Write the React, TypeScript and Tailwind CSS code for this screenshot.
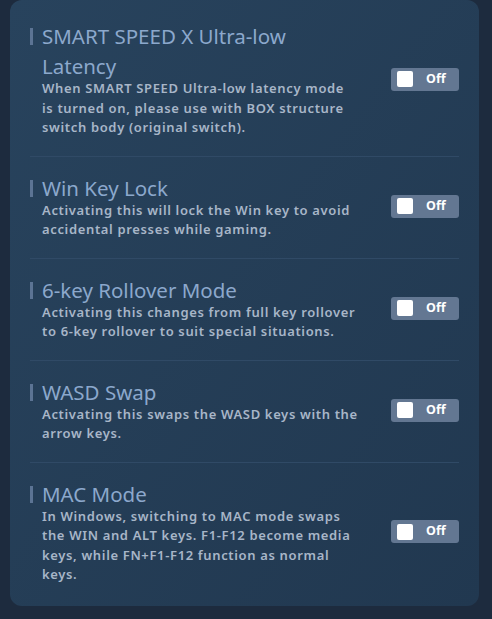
const SETTINGS = [
  {
    title: 'SMART SPEED X Ultra-low Latency',
    desc: 'When SMART SPEED Ultra-low latency mode is turned on, please use with BOX structure switch body (original switch).',
    narrow: true,
  },
  {
    title: 'Win Key Lock',
    desc: 'Activating this will lock the Win key to avoid accidental presses while gaming.',
  },
  {
    title: '6-key Rollover Mode',
    desc: 'Activating this changes from full key rollover to 6-key rollover to suit special situations.',
  },
  {
    title: 'WASD Swap',
    desc: 'Activating this swaps the WASD keys with the arrow keys.',
  },
  {
    title: 'MAC Mode',
    desc: 'In Windows, switching to MAC mode swaps the WIN and ALT keys. F1-F12 become media keys, while FN+F1-F12 function as normal keys.',
  },
]

function Toggle() {
  return (
    <button className="flex h-[23px] w-[68px] shrink-0 items-center rounded-[3px] bg-[#637792] pl-[6px]">
      <span className="h-4 w-4 rounded-[2px] bg-white" />
      <span className="ml-[13px] text-[12.5px] font-bold text-white">Off</span>
    </button>
  )
}

export default function App() {
  return (
    <div
      className="min-h-[619px] w-[492px] bg-[#1d2b3e] pl-[10px] pr-[13px]"
      style={{ fontFamily: '"Noto Sans", sans-serif' }}
    >
      <div className="rounded-xl bg-gradient-to-br from-[#28435d] to-[#213850] px-5 pb-[3px] pt-[5px]">
        {SETTINGS.map((s, i) => (
          <div
            key={s.title}
            className={`flex items-center pb-[18px] pt-4 ${i < SETTINGS.length - 1 ? 'border-b border-[#304a66]' : ''}`}
          >
            <div className="flex-1">
              <div className="flex">
                <span className="mr-[9px] mt-[7px] h-[17px] w-[3px] shrink-0 bg-[#5c7494]" />
                <h2 className="w-[290px] text-[20.5px] leading-[30px] text-[#8ca8cc]">{s.title}</h2>
              </div>
              <p
                className={`ml-3 mt-[-2px] text-[13px] font-semibold leading-[19.5px] tracking-[0.65px] text-[#a8b6c8] ${s.narrow ? 'w-[312px]' : 'w-[322px]'}`}
              >
                {s.desc}
              </p>
            </div>
            <Toggle />
          </div>
        ))}
      </div>
    </div>
  )
}
